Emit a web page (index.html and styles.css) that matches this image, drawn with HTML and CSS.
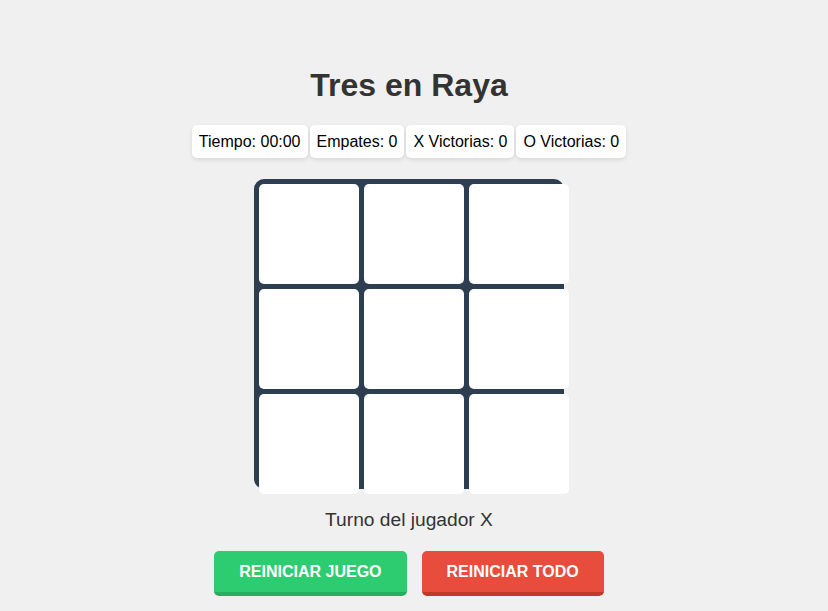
FILE: index.html
```html
<!DOCTYPE html>
<html lang="es">
<head>
<meta charset="utf-8">
<title>Tres en Raya</title>
<link rel="stylesheet" href="styles.css">
</head>
<body>
<div class="app">
  <h1 class="title">Tres en Raya</h1>
  <div class="stats">
    <div class="stat">Tiempo: 00:00</div>
    <div class="stat">Empates: 0</div>
    <div class="stat">X Victorias: 0</div>
    <div class="stat">O Victorias: 0</div>
  </div>
  <div class="board">
    <div class="cell"></div>
    <div class="cell"></div>
    <div class="cell"></div>
    <div class="cell"></div>
    <div class="cell"></div>
    <div class="cell"></div>
    <div class="cell"></div>
    <div class="cell"></div>
    <div class="cell"></div>
  </div>
  <div class="status">Turno del jugador X</div>
  <div class="actions">
    <button class="btn btn-green">REINICIAR JUEGO</button>
    <button class="btn btn-red">REINICIAR TODO</button>
  </div>
</div>
</body>
</html>
```

FILE: styles.css
```css
html, body {
  margin: 0;
  padding: 0;
  background: #f0f0f0;
  font-family: "Liberation Sans", Arial, sans-serif;
}

.app {
  width: 818px;
  padding-top: 67px;
  display: flex;
  flex-direction: column;
  align-items: center;
}

.title {
  margin: 0;
  font-size: 32px;
  line-height: 37px;
  font-weight: bold;
  color: #333;
}

.stats {
  margin-top: 21px;
  display: flex;
  gap: 2px;
}

.stat {
  background: #fff;
  padding: 8px 7px;
  line-height: 17px;
  font-size: 16px;
  color: #000;
  border-radius: 5px;
  box-shadow: 0 2px 4px rgba(0, 0, 0, 0.1);
}

.board {
  margin-top: 21px;
  box-sizing: border-box;
  width: 310px;
  height: 310px;
  padding: 5px;
  background: #2c3e50;
  border-radius: 10px;
  display: grid;
  grid-template-columns: 100px 100px 100px;
  grid-template-rows: 100px 100px 100px;
  gap: 5px;
}

.cell {
  background: #fff;
  border-radius: 5px;
}

.status {
  margin-top: 20px;
  font-size: 19.2px;
  line-height: 22px;
  color: #333;
}

.actions {
  margin-top: 20px;
  display: flex;
  gap: 15px;
}

.btn {
  border: none;
  border-bottom: 4px solid transparent;
  border-radius: 5px;
  padding: 11px 25px;
  font-family: "Liberation Sans", Arial, sans-serif;
  font-size: 16px;
  line-height: 19px;
  font-weight: bold;
  color: #fff;
  cursor: pointer;
}

.btn-green {
  background: #2ecc71;
  border-bottom-color: #27ae60;
}

.btn-red {
  background: #e74c3c;
  border-bottom-color: #c0392b;
}
```
